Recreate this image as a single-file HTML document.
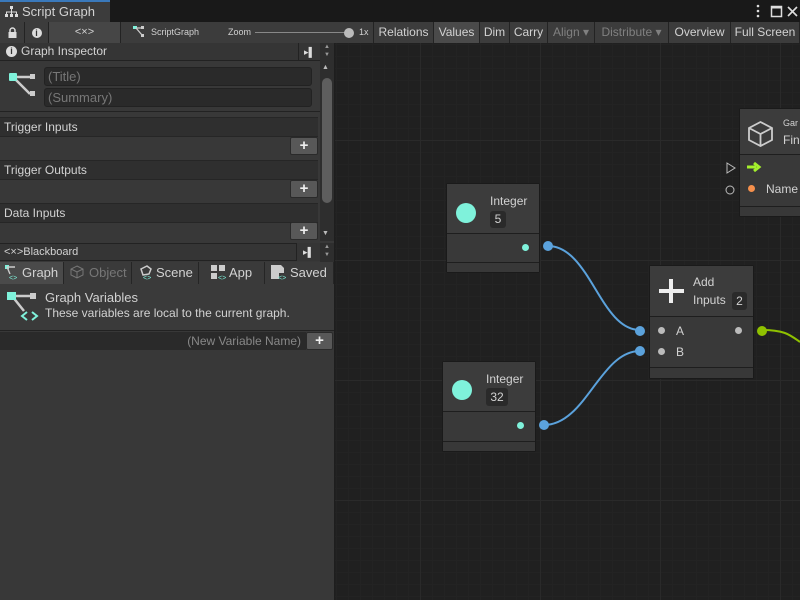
<!DOCTYPE html>
<html><head><meta charset="utf-8"><style>
*{box-sizing:border-box;margin:0;padding:0}
body{width:800px;height:600px;overflow:hidden;background:#202020;font-family:"Liberation Sans",sans-serif;color:#d2d2d2;position:relative;font-size:12px}
.a{position:absolute}
.canvas{left:335px;top:43px;width:465px;height:557px;background-color:#202020;
background-image:linear-gradient(#2a2a2a 1px,transparent 1px),linear-gradient(90deg,#2a2a2a 1px,transparent 1px),linear-gradient(#232323 1px,transparent 1px),linear-gradient(90deg,#232323 1px,transparent 1px);
background-size:120px 120px,120px 120px,12px 12px,12px 12px;background-position:0 97px,85px 0,0 1px,1px 0}
.tb{top:22px;height:21px;background:#3c3c3c;border-right:1px solid #232323;font-size:12px;line-height:21px;text-align:center;color:#d2d2d2}
.node{background:#393939;border:1px solid #1a1a1a;border-radius:2px}
.nh{background:#3c3c3c;border-bottom:1px solid #1e1e1e}
.nf{border-top:1px solid #1e1e1e;background:#383838}
.hdr{background:#2f2f2f;border-top:1px solid #262626;border-bottom:1px solid #262626;font-size:12px;line-height:18px;padding-left:4px;color:#d2d2d2}
.plus{width:28px;height:18px;background:#585858;border:1px solid #2a2a2a;border-radius:2px;color:#eee;font-size:15px;line-height:16px;text-align:center;font-weight:bold}
.fld{background:#2a2a2a;border:1px solid #222;border-radius:3px;color:#777;font-size:13px;line-height:17px;padding-left:3px}
.tab{top:262px;height:22px;background:#3a3a3a;border-right:1px solid #252525;line-height:22px;font-size:13px;padding-left:22px}
</style></head><body>
<div class="a" style="left:0;top:0;width:800px;height:22px;background:#191919"></div>
<div class="a" style="left:0;top:0;width:110px;height:22px;background:#3c3c3c;border-top:2px solid #3a79bb;font-size:13px;line-height:20px;padding-left:22px">Script Graph</div>
<svg class="a" style="left:5px;top:6px" width="13" height="12"><rect x="5" y="0" width="3" height="3" fill="#ddd"/><path d="M6.5 3v3M1.5 9V6h10v3M6.5 6v3" stroke="#ddd" fill="none"/><rect x="0" y="8" width="3" height="3" fill="#ddd"/><rect x="5" y="8" width="3" height="3" fill="#ddd"/><rect x="10" y="8" width="3" height="3" fill="#ddd"/></svg>
<svg class="a" style="left:755px;top:4px" width="44" height="14"><circle cx="3" cy="2" r="1.3" fill="#ddd"/><circle cx="3" cy="7" r="1.3" fill="#ddd"/><circle cx="3" cy="12" r="1.3" fill="#ddd"/><rect x="16.5" y="2.5" width="10" height="10" stroke="#ddd" stroke-width="1.5" fill="none"/><rect x="16" y="2" width="11" height="2.5" fill="#ddd"/><path d="M33 3l9 9M42 3l-9 9" stroke="#ddd" stroke-width="1.6"/></svg>
<div class="a" style="left:0;top:22px;width:800px;height:21px;background:#3c3c3c;border-bottom:1px solid #232323"></div>
<div class="a tb" style="left:0;width:25px"></div>
<svg class="a" style="left:8px;top:27px" width="9" height="11"><path d="M2 5V3.5a2.5 2.5 0 0 1 5 0V5" stroke="#ddd" stroke-width="1.5" fill="none"/><rect x="0.5" y="5" width="8" height="6" fill="#ddd"/></svg>
<div class="a tb" style="left:25px;width:24px"><span style="display:inline-block;width:10px;height:10px;border-radius:5px;background:#ddd;color:#333;font-size:9px;line-height:10px;font-weight:bold;vertical-align:middle">i</span></div>
<div class="a tb" style="left:49px;width:72px;background:#464646;font-size:11px">&lt;×&gt;</div>
<div class="a tb" style="left:121px;width:253px;text-align:left;font-size:9px;padding-left:30px">ScriptGraph<span style="margin-left:29px">Zoom</span></div>
<svg class="a" style="left:133px;top:26px" width="12" height="11"><rect x="0" y="0" width="4" height="3" fill="#7ff2db"/><path d="M3 2h7M3 2l6 7" stroke="#ccc" stroke-width="1.3"/><rect x="8" y="0" width="3" height="3" fill="#ccc"/><rect x="8" y="8" width="3" height="3" fill="#ccc"/></svg>
<div class="a" style="left:255px;top:32px;width:92px;height:1px;background:#888"></div>
<div class="a" style="left:344px;top:28px;width:10px;height:10px;border-radius:5px;background:#bbb"></div>
<div class="a" style="left:359px;top:22px;font-size:9px;line-height:21px">1x</div>
<div class="a tb" style="left:374px;width:60px;font-size:12px">Relations</div>
<div class="a tb" style="left:434px;width:46px;background:#4a4a4a">Values</div>
<div class="a tb" style="left:480px;width:30px">Dim</div>
<div class="a tb" style="left:510px;width:38px">Carry</div>
<div class="a tb" style="left:548px;width:47px;color:#808080">Align ▾</div>
<div class="a tb" style="left:595px;width:74px;color:#808080">Distribute ▾</div>
<div class="a tb" style="left:669px;width:62px">Overview</div>
<div class="a tb" style="left:731px;width:69px">Full Screen</div>
<div class="a" style="left:0;top:43px;width:335px;height:557px;background:#383838;border-right:1px solid #1e1e1e"></div>
<div class="a" style="left:0;top:43px;width:320px;height:18px;background:#353535;border-bottom:1px solid #222;line-height:17px;padding-left:21px;font-size:12px">Graph Inspector</div>
<div class="a" style="left:6px;top:46px;width:11px;height:11px;border-radius:6px;background:#ddd;color:#333;font-size:9px;line-height:11px;text-align:center;font-weight:bold">i</div>
<div class="a" style="left:298px;top:43px;width:22px;height:18px;border-left:1px solid #222;text-align:center;line-height:18px;font-size:9px;color:#ddd">▸▌</div>
<svg class="a" style="left:9px;top:71px" width="26" height="26"><path d="M4 6h20M4 6l17 17" stroke="#ccc" stroke-width="2.5"/><rect x="0" y="2" width="8" height="8" rx="1" fill="#7ff2db"/><rect x="21" y="3" width="5" height="5" fill="#ccc"/><rect x="21" y="20" width="5" height="5" fill="#ccc"/></svg>
<div class="a fld" style="left:44px;top:67px;width:268px;height:19px">(Title)</div>
<div class="a fld" style="left:44px;top:88px;width:268px;height:19px">(Summary)</div>
<div class="a" style="left:0;top:111px;width:320px;height:1px;background:#222"></div>
<div class="a hdr" style="left:0;top:117px;width:318px;height:20px">Trigger Inputs</div>
<div class="a plus" style="left:290px;top:137px">+</div>
<div class="a hdr" style="left:0;top:160px;width:318px;height:20px">Trigger Outputs</div>
<div class="a plus" style="left:290px;top:180px">+</div>
<div class="a hdr" style="left:0;top:203px;width:318px;height:20px">Data Inputs</div>
<div class="a plus" style="left:290px;top:222px">+</div>
<div class="a" style="left:320px;top:61px;width:14px;height:180px;background:#2e2e2e"></div>
<div class="a" style="left:322px;top:78px;width:10px;height:125px;border-radius:5px;background:#5e5e5e"></div>
<div class="a" style="left:322px;top:64px;font-size:7px;color:#bbb">▲</div>
<div class="a" style="left:322px;top:230px;font-size:7px;color:#bbb">▼</div>
<div class="a" style="left:320px;top:43px;width:14px;height:18px;background:#2e2e2e;font-size:6px;color:#999;text-align:center;line-height:8px">▲<br>▼</div>
<div class="a" style="left:0;top:243px;width:296px;height:18px;background:#353535;border-top:1px solid #222;border-bottom:1px solid #222;line-height:16px;padding-left:4px;font-size:11px">&lt;×&gt;Blackboard</div>
<div class="a" style="left:296px;top:243px;width:24px;height:18px;border-left:1px solid #222;text-align:center;line-height:18px;font-size:9px;color:#ddd;background:#353535">▸▌</div>
<div class="a" style="left:320px;top:243px;width:14px;height:19px;background:#2e2e2e;font-size:6px;color:#999;text-align:center;line-height:8px">▲<br>▼</div>
<div class="a tab" style="left:0;width:64px;background:#4a4a4a">Graph</div>
<div class="a tab" style="left:64px;width:68px;color:#777;padding-left:25px">Object</div>
<div class="a tab" style="left:132px;width:67px;padding-left:24px">Scene</div>
<div class="a tab" style="left:199px;width:66px;padding-left:30px">App</div>
<div class="a tab" style="left:265px;width:69px;padding-left:25px">Saved</div>
<svg class="a" style="left:5px;top:265px" width="14" height="15"><rect x="0" y="0" width="4" height="4" fill="#7ff2db"/><path d="M2 2h8M2 2l3 7" stroke="#ccc" stroke-width="1.4"/><text x="4" y="15" font-size="7" fill="#7ff2db" font-family="Liberation Sans">&lt;&gt;</text></svg>
<svg class="a" style="left:70px;top:265px" width="14" height="15"><path d="M7 1l6 3v6l-6 3-6-3V4zM1 4l6 3 6-3M7 7v6" stroke="#777" fill="none"/></svg>
<svg class="a" style="left:139px;top:265px" width="14" height="15"><path d="M2 4l6-3 4 3-2 5-6 1z" stroke="#ccc" stroke-width="1.5" fill="none"/><text x="4" y="15" font-size="7" fill="#7ff2db" font-family="Liberation Sans">&lt;&gt;</text></svg>
<svg class="a" style="left:211px;top:265px" width="16" height="15"><rect x="0" y="0" width="6" height="6" fill="#ccc"/><rect x="8" y="0" width="6" height="6" fill="#ccc"/><rect x="0" y="8" width="6" height="6" fill="#ccc"/><text x="7" y="15" font-size="7" fill="#7ff2db" font-family="Liberation Sans">&lt;&gt;</text></svg>
<svg class="a" style="left:271px;top:265px" width="16" height="15"><path d="M0 0h10l3 3v5H8v6H0z" fill="#ccc"/><text x="7" y="15" font-size="7" fill="#7ff2db" font-family="Liberation Sans">&lt;&gt;</text></svg>
<div class="a" style="left:0;top:284px;width:334px;height:47px;background:#3a3a3a;border-bottom:1px solid #222"></div>
<svg class="a" style="left:7px;top:290px" width="32" height="34"><path d="M5 6h20M5 6l12 15" stroke="#ccc" stroke-width="2.5"/><rect x="0" y="2" width="9" height="8" fill="#7ff2db"/><rect x="23" y="3" width="6" height="6" fill="#ccc"/><path d="M20 22l-5 4 5 4M25 22l5 4-5 4" stroke="#7ff2db" stroke-width="2" fill="none"/></svg>
<div class="a" style="left:45px;top:290px;font-size:13px">Graph Variables</div>
<div class="a" style="left:45px;top:306px;font-size:12px">These variables are local to the current graph.</div>
<div class="a" style="left:0;top:332px;width:306px;height:18px;background:#2a2a2a;color:#888;font-size:12px;line-height:18px;text-align:right;padding-right:5px">(New Variable Name)</div>
<div class="a plus" style="left:306px;top:332px;width:27px">+</div>
<div class="a canvas"></div>
<svg class="a" style="left:0;top:0" width="800" height="600">
<path d="M548 246C590 246 600 330 640 330" stroke="#5ba2dc" stroke-width="2" fill="none"/>
<path d="M544 425C586 425 600 351 640 351" stroke="#5ba2dc" stroke-width="2" fill="none"/>
<path d="M762 330C785 330 790 335 800 342" stroke="#8fc100" stroke-width="2" fill="none"/>
<circle cx="548" cy="246" r="5" fill="#5ba2dc"/><circle cx="544" cy="425" r="5" fill="#5ba2dc"/>
<circle cx="640" cy="331" r="5" fill="#5ba2dc"/><circle cx="640" cy="351" r="5" fill="#5ba2dc"/>
<circle cx="762" cy="331" r="5" fill="#8fc100"/>
<path d="M727 163l8 5-8 5z" stroke="#bbb" fill="none"/><circle cx="730" cy="190" r="4" stroke="#bbb" fill="none"/>
</svg>
<div class="a node" style="left:446px;top:183px;width:94px;height:90px">
<div class="nh" style="height:50px;position:relative"><div class="a" style="left:9px;top:19px;width:20px;height:20px;border-radius:10px;background:#7ff2db"></div><div class="a" style="left:43px;top:10px;font-size:12px">Integer</div><div class="a" style="left:43px;top:27px;width:16px;height:17px;background:#2a2a2a;border-radius:3px;font-size:12px;line-height:17px;text-align:center">5</div></div>
<div style="height:28px;position:relative"><div class="a" style="left:75px;top:10px;width:7px;height:7px;border-radius:4px;background:#7ff2db"></div></div>
<div class="nf" style="height:10px"></div></div>
<div class="a node" style="left:442px;top:361px;width:94px;height:91px">
<div class="nh" style="height:50px;position:relative"><div class="a" style="left:9px;top:18px;width:20px;height:20px;border-radius:10px;background:#7ff2db"></div><div class="a" style="left:43px;top:10px;font-size:12px">Integer</div><div class="a" style="left:43px;top:26px;width:22px;height:18px;background:#2a2a2a;border-radius:3px;font-size:12px;line-height:18px;text-align:center">32</div></div>
<div style="height:29px;position:relative"><div class="a" style="left:74px;top:10px;width:7px;height:7px;border-radius:4px;background:#7ff2db"></div></div>
<div class="nf" style="height:10px"></div></div>
<div class="a node" style="left:649px;top:265px;width:105px;height:114px">
<div class="nh" style="height:51px;position:relative"><div class="a" style="left:9px;top:23px;width:25px;height:4px;background:#eee"></div><div class="a" style="left:19px;top:13px;width:4px;height:24px;background:#eee"></div><div class="a" style="left:43px;top:9px;font-size:12px">Add</div><div class="a" style="left:43px;top:27px;font-size:12px">Inputs</div><div class="a" style="left:82px;top:26px;width:15px;height:18px;background:#2a2a2a;border-radius:3px;line-height:18px;text-align:center">2</div></div>
<div style="height:50px;position:relative"><div class="a" style="left:8px;top:10px;width:7px;height:7px;border-radius:4px;background:#bbb"></div><div class="a" style="left:8px;top:31px;width:7px;height:7px;border-radius:4px;background:#bbb"></div><div class="a" style="left:85px;top:10px;width:7px;height:7px;border-radius:4px;background:#bbb"></div><div class="a" style="left:26px;top:7px">A</div><div class="a" style="left:26px;top:28px">B</div></div>
<div class="nf" style="height:11px"></div></div>
<div class="a node" style="left:739px;top:108px;width:70px;height:109px">
<div class="nh" style="height:46px;position:relative"><svg class="a" style="left:7px;top:11px" width="27" height="27"><path d="M13.5 2L25 8v12l-11.5 6L2 20V8zM2 8l11.5 6L25 8M13.5 14v12" stroke="#ccc" stroke-width="1.8" fill="none"/></svg><div class="a" style="left:43px;top:9px;font-size:9px">Gar</div><div class="a" style="left:43px;top:24px;font-size:12px">Fin</div></div>
<div style="height:51px;position:relative"><svg class="a" style="left:6px;top:6px" width="16" height="12"><path d="M1 6h9M8 2l5 4-5 4" stroke="#a4f02c" stroke-width="3" fill="none"/></svg><div class="a" style="left:8px;top:30px;width:7px;height:7px;border-radius:4px;background:#f5904c"></div><div class="a" style="left:26px;top:27px">Name</div></div>
<div class="nf" style="height:10px"></div></div>
</body></html>
